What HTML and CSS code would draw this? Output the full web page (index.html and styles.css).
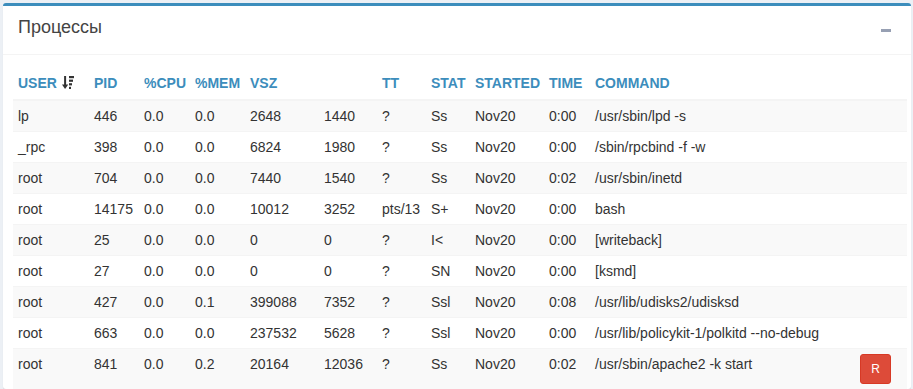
FILE: index.html
```html
<!DOCTYPE html>
<html lang="ru">
<head>
<meta charset="utf-8">
<title>Процессы</title>
<link rel="stylesheet" href="styles.css">
</head>
<body>
<div class="box">
  <div class="box-header">
    <h3 class="box-title">Процессы</h3>
    <button class="box-tool" type="button" aria-label="Свернуть"><span class="minus"></span></button>
  </div>
  <div class="box-body">
    <table class="ps">
      <colgroup>
        <col class="c-user"><col class="c-pid"><col class="c-cpu"><col class="c-mem"><col class="c-vsz"><col class="c-rss"><col class="c-tt"><col class="c-stat"><col class="c-started"><col class="c-time"><col class="c-cmd">
      </colgroup>
      <thead>
        <tr>
          <th>USER <svg class="sort" width="12" height="13" viewBox="0 0 12 13"><rect x="2.1" y="0" width="2" height="9" fill="#333"/><polygon points="0,8.4 6.2,8.4 3.1,13" fill="#333"/><rect x="7" y="0" width="5" height="2.2" fill="#333"/><rect x="7" y="3.6" width="4" height="2.2" fill="#333"/><rect x="7" y="7.2" width="3" height="2.2" fill="#333"/><rect x="7" y="10.8" width="2" height="2.2" fill="#333"/></svg></th>
          <th>PID</th><th>%CPU</th><th>%MEM</th><th>VSZ</th><th></th><th>TT</th><th>STAT</th><th>STARTED</th><th>TIME</th><th>COMMAND</th>
        </tr>
      </thead>
      <tbody>
        <tr><td>lp</td><td>446</td><td>0.0</td><td>0.0</td><td>2648</td><td>1440</td><td>?</td><td>Ss</td><td>Nov20</td><td>0:00</td><td>/usr/sbin/lpd -s</td></tr>
        <tr><td>_rpc</td><td>398</td><td>0.0</td><td>0.0</td><td>6824</td><td>1980</td><td>?</td><td>Ss</td><td>Nov20</td><td>0:00</td><td>/sbin/rpcbind -f -w</td></tr>
        <tr><td>root</td><td>704</td><td>0.0</td><td>0.0</td><td>7440</td><td>1540</td><td>?</td><td>Ss</td><td>Nov20</td><td>0:02</td><td>/usr/sbin/inetd</td></tr>
        <tr><td>root</td><td>14175</td><td>0.0</td><td>0.0</td><td>10012</td><td>3252</td><td>pts/13</td><td>S+</td><td>Nov20</td><td>0:00</td><td>bash</td></tr>
        <tr><td>root</td><td>25</td><td>0.0</td><td>0.0</td><td>0</td><td>0</td><td>?</td><td>I&lt;</td><td>Nov20</td><td>0:00</td><td>[writeback]</td></tr>
        <tr><td>root</td><td>27</td><td>0.0</td><td>0.0</td><td>0</td><td>0</td><td>?</td><td>SN</td><td>Nov20</td><td>0:00</td><td>[ksmd]</td></tr>
        <tr><td>root</td><td>427</td><td>0.0</td><td>0.1</td><td>399088</td><td>7352</td><td>?</td><td>Ssl</td><td>Nov20</td><td>0:08</td><td>/usr/lib/udisks2/udisksd</td></tr>
        <tr><td>root</td><td>663</td><td>0.0</td><td>0.0</td><td>237532</td><td>5628</td><td>?</td><td>Ssl</td><td>Nov20</td><td>0:00</td><td>/usr/lib/policykit-1/polkitd --no-debug</td></tr>
        <tr><td>root</td><td>841</td><td>0.0</td><td>0.2</td><td>20164</td><td>12036</td><td>?</td><td>Ss</td><td>Nov20</td><td>0:02</td><td><button class="btn-danger" type="button">R</button>/usr/sbin/apache2 -k start</td></tr>
      </tbody>
    </table>
  </div>
</div>
</body>
</html>
```
FILE: styles.css
```css
html, body {
  margin: 0;
  padding: 0;
  background: #ecf0f5;
  font-family: "Liberation Sans", Arial, sans-serif;
  font-size: 14px;
  line-height: 20px;
  color: #333;
}

.box {
  margin: 3px 0 0 3px;
  width: 908px;
  background: #fff;
  border-top: 3px solid #3c8dbc;
  border-radius: 3px;
  box-shadow: 0 1px 1px rgba(0, 0, 0, 0.1);
}

.box-header {
  height: 49px;
  box-sizing: border-box;
  padding: 12px 10px 0 15px;
  border-bottom: 1px solid #f4f4f4;
  display: flex;
  justify-content: space-between;
  align-items: flex-start;
}

.box-title {
  margin: 0;
  font-size: 18px;
  line-height: 18px;
  font-weight: normal;
  color: #444;
}

.box-tool {
  border: 0;
  background: transparent;
  padding: 0;
  margin: 11px 10px 0 0;
  width: 10px;
  height: 3px;
  display: flex;
}

.minus {
  display: block;
  width: 10px;
  height: 3px;
  background: #97a0b3;
}

.box-body {
  padding: 13px 0 0 10px;
}

.ps {
  table-layout: fixed;
  border-collapse: collapse;
  border-spacing: 0;
  width: 894px;
}

.c-user { width: 76px; }
.c-pid { width: 50px; }
.c-cpu { width: 51px; }
.c-mem { width: 55px; }
.c-vsz { width: 74px; }
.c-rss { width: 58px; }
.c-tt { width: 49px; }
.c-stat { width: 44px; }
.c-started { width: 74px; }
.c-time { width: 46px; }
.c-cmd { width: auto; }

.ps th,
.ps td {
  padding: 5px;
  text-align: left;
  vertical-align: top;
  white-space: nowrap;
}

.ps th {
  padding-bottom: 6px;
  color: #3c8dbc;
  font-weight: bold;
  border-bottom: 2px solid #f4f4f4;
}

.ps td {
  border-top: 1px solid #f4f4f4;
}

.ps tbody tr:nth-child(odd) {
  background: #f9f9f9;
}

.sort {
  vertical-align: -1px;
  margin-left: 1px;
}

.btn-danger {
  float: right;
  margin-right: 11px;
  background: #dd4b39;
  border: 1px solid #d73925;
  color: #fff;
  font-family: "Liberation Sans", Arial, sans-serif;
  font-size: 12px;
  line-height: 18px;
  padding: 5px 10px;
  border-radius: 3px;
}
```
